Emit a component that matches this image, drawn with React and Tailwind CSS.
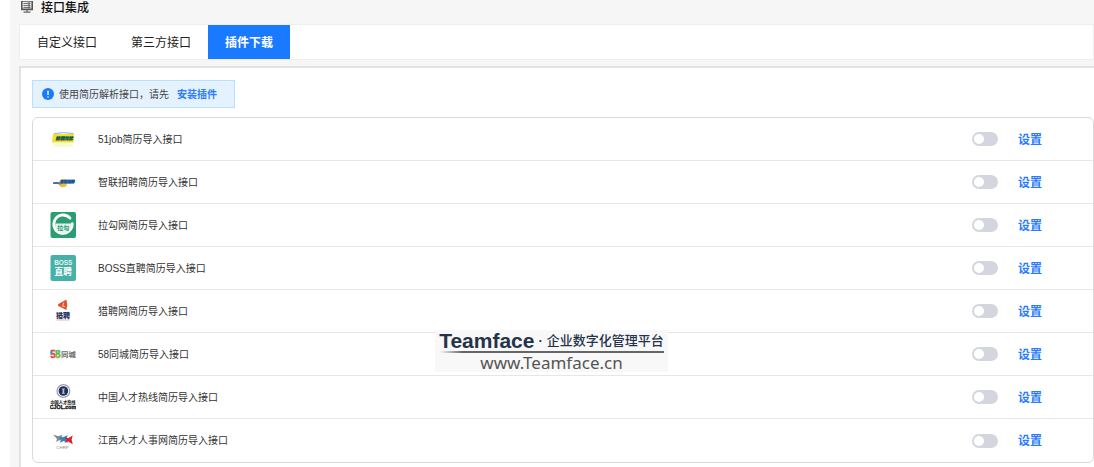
import React, { useState } from 'react';

const TABS = ['自定义接口', '第三方接口', '插件下载'];

// ============================================
// LOGOS
// ============================================
function JobLogo() {
  return (
    <svg viewBox="0 0 26 26" className="size-[26px]" aria-hidden="true">
      <path d="M4 7.6Q13 5.6 23.5 7.6" fill="none" stroke="#8fb3d0" strokeWidth="1" />
      <path d="M3 8H24L23.6 16.5H2Z" fill="#efe22c" />
      <path d="M2.5 16.5H23.5L22.5 21H4Z" fill="#f8f4b8" opacity="0.6" />
      <text x="5.6" y="14" fontSize="4.3" fontWeight="900" fontStyle="italic" fill="#1d5c50" stroke="#1d5c50" strokeWidth="0.4">前程无忧</text>
    </svg>
  );
}

function ZhaopinLogo() {
  return (
    <svg viewBox="0 0 26 26" className="size-[26px]" aria-hidden="true">
      <circle cx="13" cy="14.2" r="4" fill="#f3bd2c" />
      <path d="M3 13.4C6 12.6 9 12.8 11.5 13.8L11 15.4C8 15.2 5 15.2 3 15Z" fill="#3f70a6" />
      <path d="M8.6 14.4H11.5" stroke="#c9622f" strokeWidth="1.2" />
      <path d="M11.4 10.2H24.8L23.8 14.8H10.4Z" fill="#6f9ac6" opacity="0.7" />
      <text x="10" y="14" fontSize="3.6" fontWeight="900" fontStyle="italic" fill="#1f5a93" stroke="#1f5a93" strokeWidth="0.4">智联招聘</text>
    </svg>
  );
}

function LagouLogo() {
  return (
    <svg viewBox="0 0 26 26" className="size-[26px]" aria-hidden="true">
      <rect x="0.5" y="0" width="25.5" height="26" rx="2" fill="#2a9d72" />
      <path d="M20 6.2A9.2 9.2 0 1 0 22.2 11.6" fill="none" stroke="#fff" strokeWidth="2.8" strokeLinecap="round" />
      <path d="M5.5 11.4H21.5C22 15.5 19.5 21 13.2 21.4C7.5 21 4.8 16 5.5 11.4Z" fill="#e2f3ec" />
      <text x="13.3" y="17.8" fontSize="6" fontWeight="700" textAnchor="middle" fill="#2a9d72">拉勾</text>
    </svg>
  );
}

function BossLogo() {
  return (
    <svg viewBox="0 0 26 26" className="size-[26px]" aria-hidden="true">
      <rect x="0.5" y="0" width="25.5" height="26" rx="2" fill="#46b1a7" />
      <text x="13.2" y="10.4" fontSize="6.4" fontWeight="700" textAnchor="middle" fill="#e6f6f4">BOSS</text>
      <text x="13.2" y="20.2" fontSize="8.6" fontWeight="700" textAnchor="middle" fill="#fff">直聘</text>
    </svg>
  );
}

function LiepinLogo() {
  return (
    <svg viewBox="0 0 26 26" className="size-[26px]" aria-hidden="true">
      <path d="M16.4 1.6Q18 7 16.4 12L8.4 8Q7.4 7 8.4 6Z" fill="#e0502c" />
      <path d="M13.8 4.6L12.6 8.2L15 8.8" fill="none" stroke="#f8d5c8" strokeWidth="0.9" />
      <text x="13" y="20" fontSize="7" fontWeight="900" textAnchor="middle" fill="#26305c">猎聘</text>
      <path d="M6.5 22H19.5" stroke="#efb7a2" strokeWidth="1" />
    </svg>
  );
}

function TongchengLogo() {
  return (
    <svg viewBox="0 0 26 26" className="size-[26px]" aria-hidden="true">
      <text x="0.2" y="16.6" fontSize="10" fontWeight="900" fill="#e5484d" stroke="#e5484d" strokeWidth="0.4">5</text>
      <path d="M1.4 9.8V13" stroke="#2b8fe0" strokeWidth="1.6" />
      <text x="4.9" y="16.6" fontSize="10" fontWeight="900" fill="#55b947" stroke="#55b947" strokeWidth="0.4">8</text>
      <path d="M5.8 14.4A1.8 1.8 0 0 0 8.8 16.2" fill="none" stroke="#f0a22e" strokeWidth="1.2" />
      <text x="11" y="15.8" fontSize="7.4" fontWeight="700" fill="#6a6a6a">同城</text>
    </svg>
  );
}

function CjolLogo() {
  return (
    <svg viewBox="0 0 26 26" className="size-[26px]" aria-hidden="true">
      <circle cx="13.4" cy="7" r="6.4" fill="#fff" stroke="#9a9fb0" strokeWidth="1.2" />
      <circle cx="13.4" cy="7" r="4.8" fill="#252f55" />
      <path d="M11.6 4.4H15.2L14.2 5.8V8.4L15.2 9.8H11.6L12.6 8.4V5.8Z" fill="#b9c0d4" />
      <text x="13" y="20" fontSize="4.2" fontWeight="900" textAnchor="middle" fill="#333">中国人才热线</text>
      <text x="13" y="25.4" fontSize="5.3" fontWeight="900" textAnchor="middle" fill="#111" stroke="#111" strokeWidth="0.3">CJOL.com</text>
    </svg>
  );
}

function JiangxiLogo() {
  return (
    <svg viewBox="0 0 26 26" className="size-[26px]" aria-hidden="true">
      <path d="M3 6.6L8.4 8.2L12.4 6.8L11.4 10L12.6 13L9 12.2L6 14L7 11Z" fill="#85898d" />
      <path d="M8.4 9.6L13.4 9L17.6 7.2L16.6 11L18 14.8L13.6 13L9.6 15L11.4 11.8Z" fill="#2f86c4" />
      <path d="M14.6 9.8L18.4 10L22.8 7.4L21.6 11.4L22.8 16.2L18 13.4L14.4 15L16.6 12Z" fill="#d8232f" />
      <text x="12.6" y="21.4" fontSize="4.4" textAnchor="middle" fill="#8a8a8a">CHRP</text>
    </svg>
  );
}

const PLUGINS = [
  { name: '51job简历导入接口', Logo: JobLogo },
  { name: '智联招聘简历导入接口', Logo: ZhaopinLogo },
  { name: '拉勾网简历导入接口', Logo: LagouLogo },
  { name: 'BOSS直聘简历导入接口', Logo: BossLogo },
  { name: '猎聘网简历导入接口', Logo: LiepinLogo },
  { name: '58同城简历导入接口', Logo: TongchengLogo },
  { name: '中国人才热线简历导入接口', Logo: CjolLogo },
  { name: '江西人才人事网简历导入接口', Logo: JiangxiLogo },
];

function PluginRow({ name, Logo }) {
  const [enabled, setEnabled] = useState(false);

  return (
    <li className="flex h-[43px] items-center border-b border-[#e6e6e6] pl-[17px] pr-[51px] last:border-b-0">
      <Logo />
      <label className="ml-[22px] flex flex-1 items-center justify-between text-[10px] leading-4 text-[#333]">
        <span className="pt-px">{name}</span>
        <input
          type="checkbox"
          role="switch"
          checked={enabled}
          onChange={(e) => setEnabled(e.target.checked)}
          className="h-[14px] w-[26px] cursor-pointer appearance-none rounded-full bg-[#d3d6df] p-[2px] before:block before:size-[10px] before:rounded-full before:bg-white checked:bg-[#1a7aff] checked:before:ml-3"
        />
      </label>
      <button type="button" className="ml-5 cursor-pointer pt-px text-xs font-bold text-[#2b7bff]">
        设置
      </button>
    </li>
  );
}

export default function App() {
  const [activeTab, setActiveTab] = useState('插件下载');

  return (
    <div className="relative flex min-h-screen flex-col overflow-hidden border-l-10 border-white bg-[#f6f6f6] pl-[9px] font-['Liberation_Sans','Noto_Sans_CJK_SC',sans-serif] text-[#222]">
      {/* Header */}
      <header className="flex h-[14px] items-center gap-2 pl-[2px]">
        <svg viewBox="0 0 12 12" className="size-3" aria-hidden="true">
          <path d="M0.8 0H11.2V8.4H0.8Z" fill="#f6f6f6" stroke="#555" strokeWidth="1.6" />
          <path d="M2.4 2.4H9.6M2.4 4.4H9.6M2.4 6.4H9.6" stroke="#666" strokeWidth="1" />
          <path d="M8 1V7.6" stroke="#555" strokeWidth="1" />
          <path d="M6 8.4V11M2.5 11.2H9.5" stroke="#666" strokeWidth="1.2" />
        </svg>
        <h1 className="pt-px text-xs leading-[14px] font-medium text-[#111]">接口集成</h1>
      </header>

      {/* Tabs */}
      <nav className="mt-[10px] flex border border-[#eeeeee] bg-white">
        {TABS.map((tab) => (
          <button
            key={tab}
            type="button"
            onClick={() => setActiveTab(tab)}
            className={`h-[34px] cursor-pointer px-[17px] pt-[2px] text-xs ${
              tab === activeTab ? 'bg-[#1a7aff] font-bold text-white' : 'text-[#222]'
            }`}
          >
            {tab}
          </button>
        ))}
      </nav>

      {/* Plugin panel */}
      <main className="mt-[6px] flex-1 border-t-2 border-l-2 border-[#e2e2e2] bg-white pt-3 pb-1 pl-[11px]">
        <div className="inline-flex h-7 items-center border border-[#b9e0ff] bg-[#e4f2ff] pr-[17px] pl-[9px] align-top text-[10px] text-[#444]">
          <svg viewBox="0 0 12 12" className="mr-[5px] size-3" aria-hidden="true">
            <circle cx="6" cy="6" r="6" fill="#1a7aff" />
            <path d="M6 2.8V7" stroke="#fff" strokeWidth="1.4" />
            <circle cx="6" cy="9" r="0.8" fill="#fff" />
          </svg>
          <span className="pt-px">使用简历解析接口，请先</span>
          <a href="#install" className="ml-2 pt-px font-bold text-[#2b7bff]">
            安装插件
          </a>
        </div>

        <ul className="mt-[9px] rounded-md border border-[#d9d9d9] bg-white">
          {PLUGINS.map((plugin) => (
            <PluginRow key={plugin.name} name={plugin.name} Logo={plugin.Logo} />
          ))}
        </ul>
      </main>

      {/* Watermark */}
      <div className="absolute top-[330px] left-[425px] flex h-[42px] w-[233px] flex-col items-center bg-[#f8f8f8]">
        <div className="flex h-[21px] items-center gap-1 pt-px whitespace-nowrap text-[#25334a]">
          <span className="text-[21px] leading-5 font-bold">Teamface</span>
          <span className="text-[13px] leading-5 font-bold">·</span>
          <span className="text-[13px] leading-5 font-medium">企业数字化管理平台</span>
        </div>
        <div className="h-[2px] w-[224px] bg-linear-to-r from-transparent via-[#666] via-10% to-[#666]"></div>
        <span className="font-['Noto_Sans',sans-serif] text-[17px] leading-[19px] text-[#555]">www.Teamface.cn</span>
      </div>
    </div>
  );
}
